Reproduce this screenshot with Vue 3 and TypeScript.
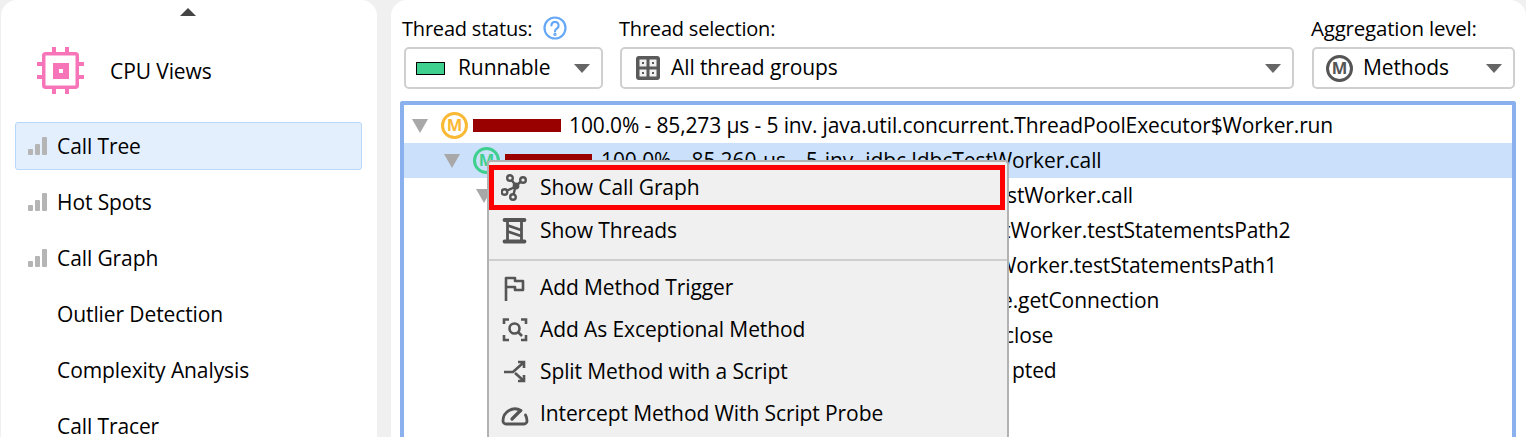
<script setup lang="ts">
interface TreeRow { depth: number; icon: string; bar: number; left: string; tailX: number; tail: string; selected?: boolean }
const rows: TreeRow[] = [
  { depth: 0, icon: '#f9b934', bar: 88, left: '100.0% - 85,273 µs - 5 inv. java.util.concurrent.ThreadPoolExecutor$Worker.run', tailX: 0, tail: '' },
  { depth: 1, icon: '#3fcf8e', bar: 87, left: '100.0% - 85,260 µs - 5 inv. jdbc.JdbcTestWorker.call', tailX: 0, tail: '', selected: true },
  { depth: 2, icon: '#3fcf8e', bar: 86, left: '99.9% - 85,247 µs - 5 inv.', tailX: 1007, tail: 'stWorker.call' },
  { depth: 3, icon: '#3fcf8e', bar: 46, left: '52.1% - 44,410 µs - 5 inv.', tailX: 1003, tail: 'tWorker.testStatementsPath2' },
  { depth: 3, icon: '#3fcf8e', bar: 30, left: '32.4% - 27,640 µs - 5 inv.', tailX: 997, tail: 'Worker.testStatementsPath1' },
  { depth: 3, icon: '#3fcf8e', bar: 8, left: '9.2% - 7,880 µs - 5 inv.', tailX: 1001, tail: 'e.getConnection' },
  { depth: 3, icon: '#3fcf8e', bar: 4, left: '4.1% - 3,512 µs - 5 inv.', tailX: 1004, tail: 'close' },
  { depth: 3, icon: '#3fcf8e', bar: 1, left: '0.9% - 780 µs - 5 inv.', tailX: 1012, tail: 'pted' },
]
const nav = [
  { label: 'Call Tree', bars: true, active: true },
  { label: 'Hot Spots', bars: true },
  { label: 'Call Graph', bars: true },
  { label: 'Outlier Detection', bars: false },
  { label: 'Complexity Analysis', bars: false },
  { label: 'Call Tracer', bars: false },
]
const leftWidth = (r: TreeRow) => r.tailX - (569 + (r.depth * 32))
</script>

<template>
  <div class="root">
    <aside class="side">
      <div class="scroll-up"></div>
      <div class="head">
        <svg class="cpu" width="48" height="48" viewBox="0 0 48 48" fill="none" stroke="#f774b9">
          <rect x="6.750" y="6.750" width="33.500" height="33.500" rx="2" stroke-width="3.500" />
          <rect x="19" y="19" width="10" height="10" stroke-width="6" />
          <path d="M17 0v6M30 0v6M17 41v6M30 41v6M0 17h6M0 30h6M41 17h6M41 30h6" stroke-width="4" />
        </svg>
        <span>CPU Views</span>
      </div>
      <nav class="nav">
        <div v-for="n in nav" :key="n.label" class="nav-item" :class="{ active: n.active }">
          <svg v-if="n.bars" class="bars" width="19" height="19" viewBox="0 0 19 19" fill="#b5b5b5">
            <rect x="0" y="12" width="5" height="6" rx="1" /><rect x="7" y="7" width="5" height="11" rx="1" /><rect x="14" y="0" width="5" height="18" rx="1" />
          </svg>
          <span class="nav-label">{{ n.label }}</span>
        </div>
      </nav>
    </aside>

    <main class="main">
      <div class="controls">
        <div class="ctl c1">
          <div class="lab">Thread status:
            <svg class="help" width="24" height="24" viewBox="0 0 24 24" fill="none" stroke="#66a8f5" stroke-width="2.200">
              <circle cx="12" cy="12" r="10.500" />
              <path d="M8.400 9.400a3.600 3.600 0 1 1 5.600 3c-1.400 1-2 1.600-2 3" stroke-linecap="round" />
              <circle cx="12" cy="18.400" r="0.600" fill="#66a8f5" />
            </svg>
          </div>
          <div class="box">
            <span class="swatch"></span>
            <span class="val">Runnable</span>
            <span class="caret"></span>
          </div>
        </div>
        <div class="ctl c2">
          <div class="lab">Thread selection:</div>
          <div class="box">
            <svg width="24" height="24" viewBox="0 0 24 24" class="ico-grid">
              <rect x="0" y="0" width="24" height="24" rx="3" fill="#5a5a5a" />
              <rect x="3.500" y="3.500" width="7" height="7" fill="#f0f0f0" /><rect x="13.500" y="3.500" width="7" height="7" fill="#f0f0f0" />
              <rect x="3.500" y="13.500" width="7" height="7" fill="#f0f0f0" /><rect x="13.500" y="13.500" width="7" height="7" fill="#f0f0f0" />
              <rect x="6" y="6" width="2" height="2" fill="#5a5a5a" /><rect x="16" y="6" width="2" height="2" fill="#5a5a5a" />
              <rect x="6" y="16" width="2" height="2" fill="#5a5a5a" /><rect x="16" y="16" width="2" height="2" fill="#5a5a5a" />
            </svg>
            <span class="val">All thread groups</span>
            <span class="caret"></span>
          </div>
        </div>
        <div class="ctl c3">
          <div class="lab lab-agg">Aggregation level:</div>
          <div class="box">
            <span class="m gray">M</span>
            <span class="val">Methods</span>
            <span class="caret"></span>
          </div>
        </div>
      </div>

      <div class="tree">
        <div v-for="(r, i) in rows" :key="i" class="row" :class="{ sel: r.selected, ['d' + r.depth]: true }">
          <span class="tri"></span>
          <span class="m" :style="{ color: r.icon, borderColor: r.icon }">M</span>
          <span class="bar-track"><span class="bar" :style="{ width: r.bar + 'px' }"></span></span>
          <span v-if="r.tailX" class="txt" :style="{ width: leftWidth(r) + 'px' }">{{ r.left }}</span>
          <span v-else class="txt">{{ r.left }}</span>
          <span v-if="r.tail" class="txt">{{ r.tail }}</span>
        </div>
      </div>

      <div class="menu">
        <div class="mi focus">
          <svg class="mi-ico" width="28" height="28" viewBox="0 0 28 28" fill="none" stroke="#555" stroke-width="2.400">
            <path d="M10.500 6l3.500 4.500M20 7.500l-3.500 3M6 16.500l7-3M12.500 20.500l1.500-6" />
            <circle cx="9" cy="4" r="2.800" /><circle cx="22" cy="6" r="2.800" /><circle cx="3.500" cy="18" r="2.800" /><circle cx="12" cy="23" r="2.800" /><circle cx="15" cy="12" r="2.200" fill="#555" />
          </svg>
          <span>Show Call Graph</span>
        </div>
        <div class="mi">
          <svg class="mi-ico" width="28" height="28" viewBox="0 0 28 28" fill="none" stroke="#555" stroke-width="2.800">
            <path d="M3.500 3h20M3.500 24.500h20" stroke-width="3.800" stroke-linecap="round" />
            <path d="M6.500 4v20M20.500 4v20" />
            <path d="M7 8.500l13 4.500M7 14.500l13 4.500" stroke-width="2.600" />
          </svg>
          <span>Show Threads</span>
        </div>
        <div class="sep"></div>
        <div class="mi">
          <svg class="mi-ico" width="28" height="28" viewBox="0 0 28 28" fill="none" stroke="#555" stroke-width="2.600">
            <path d="M5 27V4h9v3h8v9h-8v-3H5" stroke-linejoin="round" />
          </svg>
          <span>Add Method Trigger</span>
        </div>
        <div class="mi">
          <svg class="mi-ico" width="28" height="28" viewBox="0 0 28 28" fill="none" stroke="#555" stroke-width="2.600">
            <path d="M3 8V3.500h5M20 3.500h5V8M3 19v5h5M20 24h5v-5" />
            <circle cx="13.500" cy="12.500" r="5" />
            <path d="M17.500 16.500l3.500 3.500" />
          </svg>
          <span>Add As Exceptional Method</span>
        </div>
        <div class="mi">
          <svg class="mi-ico" width="28" height="28" viewBox="0 0 28 28" fill="none" stroke="#555" stroke-width="2.600">
            <path d="M3 14h9l10-9M17 4h6v6M14 15l9 8M23 17v6h-6" />
          </svg>
          <span>Split Method with a Script</span>
        </div>
        <div class="mi">
          <svg class="mi-ico" width="28" height="28" viewBox="0 0 28 28" fill="none" stroke="#555" stroke-width="2.800">
            <path d="M5 24a3 3 0 0 1-3-3 12 12 0 0 1 18-10.500M26 21a3 3 0 0 1-3 3H5M26 21a12 12 0 0 0-1.500-6" stroke-linecap="round" />
            <path d="M11 19l8-8" stroke-width="3.200" stroke-linecap="round" />
          </svg>
          <span>Intercept Method With Script Probe</span>
        </div>
      </div>
    </main>
  </div>
</template>

<style>
html, body { margin: 0; background: #f0f0f0; }
</style>

<style scoped>
.root {
  display: flex;
  width: 1526px;
  height: 437px;
  overflow: hidden;
  background: #f0f0f0;
  font-family: "Open Sans", "Noto Sans", sans-serif;
  font-size: 21px;
  color: #000;
  letter-spacing: -0.1px;
}
.side {
  width: 376px;
  margin-left: 1px;
  flex: none;
  background: #fff;
  border-radius: 16px 16px 0 0;
}
.scroll-up {
  width: 0; height: 0;
  margin: 8px 0 0 179px;
  border-left: 8px solid transparent;
  border-right: 8px solid transparent;
  border-bottom: 8px solid #444;
}
.head {
  display: flex;
  align-items: center;
  gap: 25px;
  margin: 31px 0 0 36px;
}
.cpu { flex: none; }
.nav { margin: 27px 0 0 14px; width: 347px; display: flex; flex-direction: column; gap: 8px; }
.nav-item {
  box-sizing: border-box;
  height: 48px;
  display: flex;
  align-items: center;
  padding-left: 12px;
  border: 1px solid transparent;
  border-radius: 3px;
}
.nav-item.active { background: #e4effd; border-color: #b7d7fb; }
.bars { flex: none; margin-right: -1px; }
.nav-item .nav-label { padding-left: 11px; }
.nav-item:nth-child(n+4) .nav-label { padding-left: 29px; }
.main {
  position: relative;
  flex: 1;
  margin-left: 14px;
  background: #fff;
  border-radius: 16px 16px 0 0;
}
.controls { display: flex; padding: 0 0 0 11px; }
.ctl { flex: none; }
.c1 { width: 217px; }
.c2 { width: 692px; }
.c3 { width: 203px; }
.lab {
  display: flex; align-items: center; gap: 11px;
  height: 24px; margin-top: 16px; white-space: nowrap;
  font-size: 20px; letter-spacing: -0.2px;
}
.lab-agg { font-size: 20.500px; }
.box {
  box-sizing: border-box;
  display: flex; align-items: center;
  height: 42px; margin: 7px 0 0 2px;
  border: 2px solid #cfcfcf; border-radius: 5px;
  background: #fff;
  padding: 0 11px 0 10px;
}
.c1 .box { width: 199px; }
.c2 .box { width: 674px; margin-left: 1px; padding-left: 14px; }
.c3 .box { width: 203px; margin-left: 1px; padding-left: 12px; }
.swatch { width: 29px; height: 13px; flex: none; background: #3fcf8e; border: 1px solid #000; box-sizing: border-box; margin-right: 13px; }
.ico-grid { flex: none; margin-right: 11px; }
.c3 .m { margin-right: 10px; }
.val { flex: 1; white-space: nowrap; margin-top: -2px; }
.caret {
  flex: none; width: 0; height: 0;
  border-left: 8px solid transparent; border-right: 8px solid transparent;
  border-top: 9px solid #666;
}
.m {
  box-sizing: border-box; flex: none;
  width: 27px; height: 27px; border: 3px solid; border-radius: 50%;
  display: inline-flex; align-items: center; justify-content: center;
  font-size: 16.500px; font-weight: 700; line-height: 1; letter-spacing: 0;
  font-family: "Noto Sans", sans-serif;
}
.m.gray { color: #555; border-color: #555; }
.tree {
  box-sizing: border-box;
  width: 1116px;
  height: 340px;
  margin: 12px 0 0 9px;
  border: 4px solid #8ab0ee;
  border-bottom: 0;
  border-radius: 3px 3px 0 0;
  padding-top: 3px;
  overflow: hidden;
  background: #fff;
}
.row {
  display: flex; align-items: center; height: 35px; white-space: nowrap;
}
.row.sel { background: #cae0fb; }
.row.sel .txt { word-spacing: 1.400px; }
.row .txt { margin-top: -1px; }
.d0 { padding-left: 8px; letter-spacing: -0.130px; }
.d1 { padding-left: 40px; }
.d2 { padding-left: 72px; }
.d3 { padding-left: 104px; }
.tri {
  flex: none; width: 0; height: 0; margin-right: 13px;
  border-left: 8px solid transparent; border-right: 8px solid transparent;
  border-top: 14px solid #a8a8a8;
}
.bar-track { flex: none; width: 88px; margin: 0 8px 0 5px; display: block; }
.bar { display: block; height: 13px; background: #990000; margin-top: -1px; }
.txt { flex: none; }
.menu {
  position: absolute;
  box-sizing: border-box;
  left: 96px; top: 160px;
  width: 522px; height: 277px;
  background: #f0f0f0;
  border: 2px solid #b2b2b2;
  border-bottom: 0;
  padding: 3px 0 0 0;
  border-radius: 4px 4px 0 0;
}
.mi {
  box-sizing: border-box;
  height: 42px; display: flex; align-items: center;
  padding-left: 12px; gap: 11px; white-space: nowrap;
  width: 516px;
}
.mi span { margin-top: -2px; }
.mi-ico { flex: none; }
.mi.focus {
  height: 45px;
  border: 5px solid #f00;
  padding-left: 7px;
}
.sep { height: 2px; background: #cfcfcf; margin: 7px 0 6px; width: 518px; }
</style>
